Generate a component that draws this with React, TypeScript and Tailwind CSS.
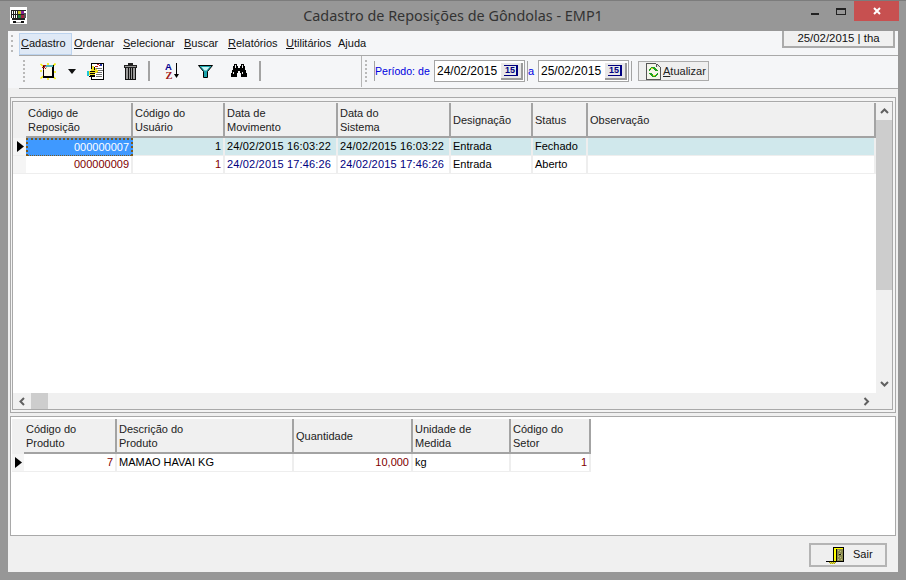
import React from "react";

const Pixel = ({ w, h, children, className }: { w: number; h: number; children: React.ReactNode; className?: string }) => (
  <svg width={w} height={h} viewBox={`0 0 ${w} ${h}`} shapeRendering="crispEdges" className={className}>{children}</svg>
);

const AppIcon = () => (
  <Pixel w={17} h={17} className="block">
    <rect width="17" height="17" fill="#fff" />
    <path d="M1 3h15v1H1zM1 3h1v8H1zM3 3h1v8H3zM5 3h1v8H5zM7 3h1v8H7zM1 7h15v1H1zM2 11h13v2H2z" fill="#222" />
    <rect x="8" y="4" width="3" height="3" fill="#c8c828" />
    <rect x="11" y="4" width="3" height="3" fill="#802090" />
    <rect x="8" y="8" width="3" height="3" fill="#208040" />
    <rect x="11" y="8" width="3" height="3" fill="#a02040" />
    <rect x="14" y="6" width="2" height="5" fill="#555" />
    <rect x="3" y="14" width="3" height="2" fill="#111" />
    <rect x="11" y="14" width="3" height="2" fill="#111" />
    <rect x="6" y="15" width="5" height="1" fill="#999" />
  </Pixel>
);

const NewIcon = () => (
  <svg width="16" height="17" viewBox="0 0 16 17" className="block">
    <path d="M0.5 1 3.5 3.5M15.5 0.5 12.5 3.5M0.5 15.5 3.5 13M15.5 16 12.5 13M8 0V2M0 8H2M16 9H14M8 15V17" stroke="#f5f000" strokeWidth="1.6" />
    <g shapeRendering="crispEdges">
      <rect x="3" y="2" width="11" height="13" fill="#000" />
      <rect x="4" y="3" width="8" height="10" fill="#fffbe6" />
      <rect x="4" y="2" width="9" height="2" fill="#4fb4c0" />
      <path d="M3 2h3v1H3zM4 3h1v1H4zM2 4h3v1H2zM5 5h1v1H5zM3 6h1v1H3z" fill="#b01818" />
      <rect x="6" y="4" width="1" height="1" fill="#e0a0a0" />
    </g>
  </svg>
);

const EditIcon = () => (
  <Pixel w={17} h={17} className="block">
    <rect x="4" y="0" width="13" height="17" fill="#000" />
    <rect x="5" y="1" width="11" height="15" fill="#fff" />
    <path d="M10 1h2v1h-2zM12 2h2v1h-2zM8 3h3v1H8z" fill="#c02020" />
    <path d="M13 1h2v2h-2z" fill="#2030a0" />
    <path d="M9 5h6v1H9zM11 7h5v1h-5zM10 9h5v1h-5zM9 11h6v1H9zM9 13h6v1H9z" fill="#707070" />
    <path d="M5 3h2v1h1v1h1v1h1v1h1v2h-1v1H8v3H3v-1H1V8h3V6h1z" fill="#f0e020" />
    <path d="M0 8h2v5H0z" fill="#18c8d8" />
    <path d="M3 8h5v1H3zM3 10h5v1H3zM3 12h5v1H3zM7 4h1v3H7z" fill="#000" />
    <path d="M2 13h6v1H2z" fill="#000" />
  </Pixel>
);

const TrashIcon = () => (
  <Pixel w={13} h={17} className="block">
    <rect x="4" y="0" width="5" height="2" fill="#222" />
    <rect x="0" y="2" width="13" height="3" fill="#222" />
    <rect x="1" y="3" width="11" height="1" fill="#999" />
    <rect x="1" y="5" width="11" height="12" fill="#111" />
    <path d="M2 5h2v11H2zM5 5h1v11H5zM7 5h1v11H7zM9 5h2v11H9z" fill="#9a9a9a" />
  </Pixel>
);

const SortIcon = () => (
  <svg width="16" height="18" viewBox="0 0 16 18" className="block">
    <text x="0" y="8" fontFamily="'Liberation Sans',sans-serif" fontWeight="700" fontSize="9.5" fill="#000090">A</text>
    <text x="0.5" y="17" fontFamily="'Liberation Serif',serif" fontWeight="700" fontSize="10.5" fill="#a01818">Z</text>
    <path d="M11.5 1v11" stroke="#000" strokeWidth="1" />
    <path d="M9 12h5l-2.5 4z" fill="#000" />
  </svg>
);

const FunnelIcon = () => (
  <svg width="15" height="13" viewBox="0 0 15 13" className="block">
    <path d="M0.5 0.5H14.5L9.5 6.5V12.5H5.5V6.5Z" fill="#1ba3ab" stroke="#000" strokeWidth="1" />
    <path d="M3.5 2H11.5L8.5 5.5H6.5Z" fill="#c8f4f4" />
  </svg>
);

const BinocularIcon = () => (
  <Pixel w={16} h={14} className="block">
    <path d="M3 0h3v2h1v2h2V2h1V0h3v2h1v4h1v3h1v4h-6V9H9V7H7v2H6v4H0V9h1V6h1V2h1z" fill="#000" />
    <path d="M4 1h1v3H4zM11 1h1v3h-1zM2 8h1v2H2zM11 8h1v2h-1z" fill="#e8e8e8" />
  </Pixel>
);

const RefreshIcon = () => (
  <Pixel w={15} h={17} className="block">
    <path d="M0 0h10v1h2v1h1v1h1v1h1v13H0z" fill="#555" />
    <path d="M1 1h9v3h4v12H1z" fill="#f4f4ea" />
    <path d="M11 2h1v1h1v1h-2z" fill="#ddd" />
    <path d="M5 4h4v1h1v1h1v1h1v1H9V7H8V6H5v1H4v1H3V6h1V5h1z" fill="#20a020" />
    <path d="M3 10h3v1h1v1h3v-1h1v-1h1v2h-1v1h-1v1H6v-1H5v-1H4v-1H3z" fill="#20a020" />
    <path d="M5 5h2v1H5zM7 12h2v1H7z" fill="#e8e020" />
  </Pixel>
);

const DoorIcon = () => (
  <Pixel w={18} h={18} className="block">
    <path d="M7 1h11v15H7z" fill="#000" />
    <path d="M8 2h2v13H8zM10 2h7v1h-7z" fill="#ffff00" />
    <path d="M11 3h6v12h-6z" fill="#8c8c50" />
    <path d="M12 4h1v1h-1zM14 5h1v1h-1zM13 7h1v1h-1zM15 8h1v1h-1zM12 10h1v1h-1zM14 11h1v1h-1zM15 13h1v1h-1zM12 13h1v1h-1z" fill="#c0c080" />
    <path d="M13 8h2v1h-2z" fill="#111" />
    <path d="M0 15h7v1H0z" fill="#000" />
    <path d="M3 16h1v1H3zM5 16h1v1H5zM7 16h1v1H7zM9 16h1v1H9zM4 17h1v1H4zM6 17h1v1H6zM8 17h1v1H8z" fill="#a0a020" />
    <path d="M4 16h1v1H4zM6 16h1v1H6zM8 16h1v1H8zM5 17h1v1H5zM7 17h1v1H7z" fill="#e8e030" />
  </Pixel>
);

const Grip = () => (
  <div className="flex h-[26px] w-[3px] shrink-0 flex-col justify-between py-0.5">
    {[0, 1, 2, 3, 4, 5].map((i) => (
      <div key={i} className="h-[2px] w-[2px] bg-[#b9b9b9]" />
    ))}
  </div>
);

const Sep = ({ className = "" }: { className?: string }) => <div className={`h-[20px] shrink-0 bg-[#a3a3a3] ${className}`} />;

const Chevron = ({ dir, className = "" }: { dir: "up" | "down" | "left" | "right"; className?: string }) => {
  const d = { up: "M1 6 4.5 2.5 8 6", down: "M1 2 4.5 5.5 8 2", left: "M6 1 2.5 4.5 6 8", right: "M2.5 1 6 4.5 2.5 8" }[dir];
  return (
    <svg width="9" height="9" viewBox="0 0 9 9" className={className}>
      <path d={d} fill="none" stroke="#606060" strokeWidth="2" />
    </svg>
  );
};

const DateField = ({ value }: { value: string }) => (
  <div className="flex h-[22px] w-[91px] shrink-0 items-center border border-[#a5a5a5] bg-white pl-[2px] pr-px">
    <span className="flex-1 text-[12px] leading-none text-black">{value}</span>
    <div className="flex h-[17px] w-[22px] items-center justify-center border-r-2 border-b-2 border-[#9a9a9a] bg-[#e8e8e8]">
      <span className="border-x-2 border-y border-[#000080] border-l-0 px-px text-[9px] font-bold leading-[9px] text-[#000080]">15</span>
    </div>
  </div>
);

const HeaderCell = ({ w, lines }: { w: string; lines: string[] }) => (
  <div className={`${w} flex h-[35px] shrink-0 flex-col justify-center border-r-2 border-b-2 border-[#a3a3a3] bg-[#f0f0f0] pl-[2px] leading-[14px] text-[#222]`}>
    {lines.map((l) => (
      <span key={l}>{l}</span>
    ))}
  </div>
);

const Cell = ({ w, children, right, color, selected, date }: { w: string; children?: React.ReactNode; right?: boolean; color?: string; selected?: boolean; date?: boolean }) => (
  <div
    className={`${w} flex h-[18px] shrink-0 items-center truncate border-r-2 border-b border-[#eeeeee] px-[2px] ${right ? "justify-end" : ""} ${color ?? "text-black"} ${date ? "tracking-[0.17px]" : ""} ${
      selected ? "border-2 border-dotted !border-[#7a5a20] bg-[#3f99ff] !text-white" : ""
    }`}
  >
    {children}
  </div>
);

const Triangle = () => (
  <svg width="7" height="11" viewBox="0 0 7 11" className="block">
    <path d="M0 0 7 5.5 0 11z" fill="#000" />
  </svg>
);

const Indicator = ({ active, w }: { active?: boolean; w: string }) => (
  <div className={`${w} flex h-[18px] shrink-0 items-center justify-end border-b border-[#eeeeee] bg-[#f5f5f5] pr-[2px]`}>{active && <Triangle />}</div>
);

const topW = ["w-[107px]", "w-[92px]", "w-[113px]", "w-[113px]", "w-[82px]", "w-[55px]", "w-[288px]"];

const RED = "text-[#800000]";
const NAVY = "text-[#000080]";

const MENU = [
  { t: "Cadastro", u: "C", w: "w-[53px]", active: true },
  { t: "Ordenar", u: "O", w: "w-[49px]" },
  { t: "Selecionar", u: "S", w: "w-[61px]" },
  { t: "Buscar", u: "B", w: "w-[44px]" },
  { t: "Relatórios", u: "R", w: "w-[58px]" },
  { t: "Utilitários", u: "U", w: "w-[52px]" },
  { t: "Ajuda", u: "", w: "w-[40px]" },
];

export default function App() {
  return (
    <div className="relative flex h-[580px] w-[906px] flex-col overflow-hidden border-t border-[#7c7c7c] bg-[#979797] font-['Liberation_Sans',sans-serif] text-[11px] leading-none">
      {/* Title bar */}
      <div className="relative flex h-[30px] shrink-0 items-center justify-center">
        <div className="absolute left-[10px] top-[6px]"><AppIcon /></div>
        <span className="font-['Noto_Sans',sans-serif] text-[14.4px] text-[#333]">Cadastro de Reposições de Gôndolas - EMP1</span>
        <div className="absolute right-[7px] top-0 flex h-[20px] items-start">
          <div className="mr-[17px] mt-[12px] h-[2px] w-[8px] bg-[#222]" />
          <div className="mr-[8px] mt-[7px] h-[7px] w-[10px] border border-t-2 border-[#222]" />
          <div className="flex h-[20px] w-[45px] items-center justify-center bg-[#c75050]">
            <svg width="8" height="8" viewBox="0 0 8 8"><path d="M1 1 7 7M7 1 1 7" stroke="#fff" strokeWidth="2" /></svg>
          </div>
        </div>
      </div>

      {/* Body */}
      <div className="mx-2 flex h-[541px] shrink-0 flex-col bg-[#f0f0f0]">
        {/* Menu */}
        <div className="relative flex h-[25px] shrink-0 items-center bg-[#f5f6f8] pl-[3px]">
          <div className="flex h-[18px] w-[3px] shrink-0 flex-col justify-between">
            {[0, 1, 2, 3].map((i) => (
              <div key={i} className="h-[2px] w-[2px] bg-[#b9b9b9]" />
            ))}
          </div>
          <div className="ml-[5px] flex h-[22px] items-center">
            {MENU.map((m) => (
              <div key={m.t} className={`${m.w} flex h-[22px] shrink-0 items-center text-[#111] ${m.active ? "border border-[#bcd3ee] bg-[#dfe9f6] pl-px" : "pl-[2px]"}`}>
                {m.u ? (
                  <span>
                    <span className="underline">{m.u}</span>
                    {m.t.slice(1)}
                  </span>
                ) : (
                  m.t
                )}
              </div>
            ))}
          </div>
          <div className="ml-auto mr-[3px] flex h-[17px] w-[113px] items-center justify-center self-start border-2 border-t-0 border-[#ababab] bg-[#f0f0f0] text-[11.4px] text-[#111]">25/02/2015 | tha</div>
          <div className="absolute bottom-0 left-[11px] right-0 h-px bg-[#a9a9a9]" />
        </div>

        {/* Toolbar */}
        <div className="flex h-[32px] shrink-0 items-center bg-[#f5f6f8] pb-[2px] pl-[15px]">
          <Grip />
          <div className="ml-[14px]"><NewIcon /></div>
          <svg width="8" height="5" viewBox="0 0 8 5" className="ml-[12px]"><path d="M0 0h8L4 5z" fill="#111" /></svg>
          <div className="ml-[11px]"><EditIcon /></div>
          <div className="ml-[20px]"><TrashIcon /></div>
          <Sep className="ml-[11px] w-[2px]" />
          <div className="ml-[15px]"><SortIcon /></div>
          <div className="ml-[17px]"><FunnelIcon /></div>
          <div className="ml-[18px]"><BinocularIcon /></div>
          <Sep className="ml-[12px] w-[2px]" />
          <div className="ml-[100px] h-[32px] w-px shrink-0 bg-[#b5b5b5]" />
          <div className="ml-[3px]"><Grip /></div>
          <Sep className="ml-[6px] w-px bg-[#555]" />
          <span className="w-[59px] shrink-0 text-[10.6px] text-[#0000e0]">Período: de</span>
          <DateField value="24/02/2015" />
          <Sep className="ml-[2px] w-px bg-[#555]" />
          <span className="w-[10px] shrink-0 text-[#0000e0]">a</span>
          <DateField value="25/02/2015" />
          <Sep className="ml-[2px] w-px" />
          <div className="ml-[6px] flex h-[20px] w-[71px] shrink-0 items-center border border-[#ababab] bg-[#efefef] pl-[7px] text-[#222]">
            <RefreshIcon />
            <span className="ml-[2px]"><span className="underline">A</span>tualizar</span>
          </div>
        </div>
        <div className="ml-[11px] h-px shrink-0 bg-[#a9a9a9]" />

        {/* Top panel */}
        <div className="mx-[2px] mt-[8px] h-[316px] shrink-0 border border-[#a9a9a9] bg-[#f4f4f4] pl-px pr-[2px] pt-[3px]">
          <div className="h-[309px] border border-[#a9a9a9] pt-px">
            <div className="flex h-[290px] bg-white">
              <div className="w-[863px] shrink-0">
                <div className="flex">
                  <div className="h-[35px] w-[13px] shrink-0 bg-[#f0f0f0]" />
                  <HeaderCell w={topW[0]} lines={["Código de", "Reposição"]} />
                  <HeaderCell w={topW[1]} lines={["Código do", "Usuário"]} />
                  <HeaderCell w={topW[2]} lines={["Data de", "Movimento"]} />
                  <HeaderCell w={topW[3]} lines={["Data do", "Sistema"]} />
                  <HeaderCell w={topW[4]} lines={["Designação"]} />
                  <HeaderCell w={topW[5]} lines={["Status"]} />
                  <HeaderCell w={topW[6]} lines={["Observação"]} />
                </div>
                <div className="flex bg-[#d0e8ec]">
                  <Indicator active w="w-[13px]" />
                  <Cell w={topW[0]} right selected>000000007</Cell>
                  <Cell w={topW[1]} right>1</Cell>
                  <Cell w={topW[2]} date>24/02/2015 16:03:22</Cell>
                  <Cell w={topW[3]} date>24/02/2015 16:03:22</Cell>
                  <Cell w={topW[4]}>Entrada</Cell>
                  <Cell w={topW[5]}>Fechado</Cell>
                  <Cell w={topW[6]} />
                </div>
                <div className="flex">
                  <Indicator w="w-[13px]" />
                  <Cell w={topW[0]} right color={RED}>000000009</Cell>
                  <Cell w={topW[1]} right color={RED}>1</Cell>
                  <Cell w={topW[2]} color={NAVY} date>24/02/2015 17:46:26</Cell>
                  <Cell w={topW[3]} color={NAVY} date>24/02/2015 17:46:26</Cell>
                  <Cell w={topW[4]}>Entrada</Cell>
                  <Cell w={topW[5]}>Aberto</Cell>
                  <Cell w={topW[6]} />
                </div>
              </div>
              {/* Vertical scrollbar */}
              <div className="flex w-[16px] shrink-0 flex-col bg-[#f0f0f0]">
                <div className="flex h-[17px] items-center justify-center"><Chevron dir="up" /></div>
                <div className="h-[170px] bg-[#cdcdcd]" />
                <div className="flex-1" />
                <div className="flex h-[17px] items-center justify-center"><Chevron dir="down" /></div>
              </div>
            </div>
            {/* Horizontal scrollbar */}
            <div className="flex h-[16px] items-center bg-[#f0f0f0]">
              <Chevron dir="left" className="ml-[5px]" />
              <div className="ml-[4px] h-[16px] w-[17px] bg-[#cdcdcd]" />
              <Chevron dir="right" className="ml-auto mr-[21px]" />
            </div>
          </div>
        </div>

        {/* Lower panel */}
        <div className="mx-[2px] mt-[3px] h-[120px] shrink-0 border border-[#a9a9a9] bg-white pl-px pt-[2px]">
          <div className="flex">
            <div className="h-[35px] w-[12px] shrink-0 bg-[#f0f0f0]" />
            <HeaderCell w="w-[93px]" lines={["Código do", "Produto"]} />
            <HeaderCell w="w-[177px]" lines={["Descrição do", "Produto"]} />
            <HeaderCell w="w-[119px]" lines={["Quantidade"]} />
            <HeaderCell w="w-[98px]" lines={["Unidade de", "Medida"]} />
            <HeaderCell w="w-[80px]" lines={["Código do", "Setor"]} />
          </div>
          <div className="flex">
            <Indicator active w="w-[12px]" />
            <Cell w="w-[93px]" right color={RED}>7</Cell>
            <Cell w="w-[177px]">MAMAO HAVAI KG</Cell>
            <Cell w="w-[119px]" right color={RED}>10,000</Cell>
            <Cell w="w-[98px]">kg</Cell>
            <Cell w="w-[80px]" right color={RED}>1</Cell>
          </div>
        </div>

        {/* Footer */}
        <div className="flex flex-1 items-center justify-end pr-[11px] pt-px">
          <div className="flex h-[24px] w-[78px] items-center border-2 border-[#b4b4b4] bg-[#efefef] pl-[15px] text-[#111]">
            <DoorIcon />
            <span className="ml-[9px]">Sair</span>
          </div>
        </div>
      </div>
    </div>
  );
}
